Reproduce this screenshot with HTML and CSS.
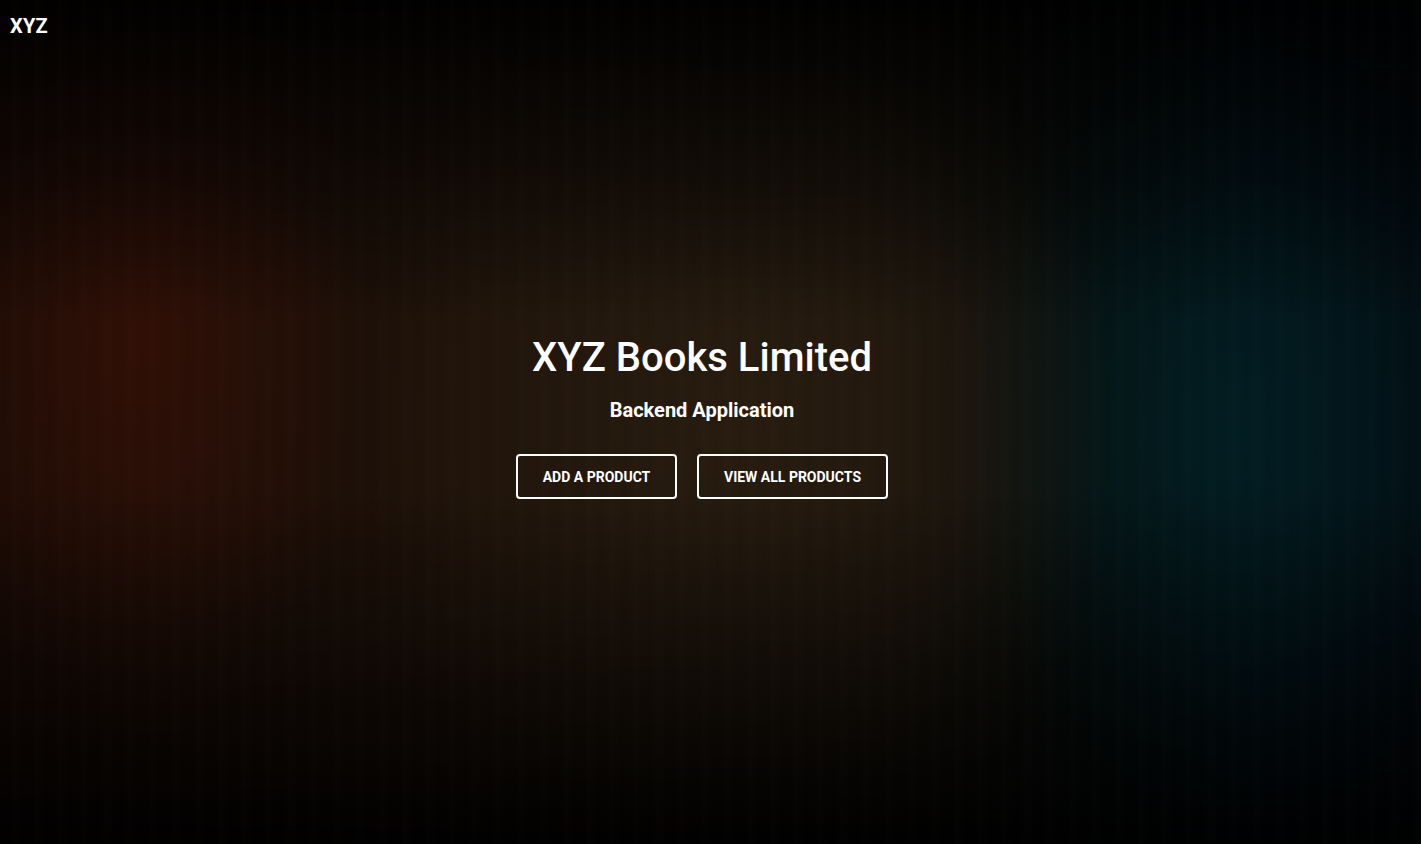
FILE: index.html
```html
<!DOCTYPE html>
<html lang="en">
<head>
<meta charset="utf-8">
<title>XYZ Books Limited</title>
<link rel="stylesheet" href="styles.css">
</head>
<body>
<div class="page">
  <header class="topbar">
    <a class="brand" href="#">XYZ</a>
  </header>
  <main class="hero">
    <h1 class="hero-title">XYZ Books Limited</h1>
    <h2 class="hero-sub">Backend Application</h2>
    <div class="actions">
      <a class="btn btn-add" href="#">Add a product</a>
      <a class="btn btn-view" href="#">View all products</a>
    </div>
  </main>
</div>
</body>
</html>
```
FILE: styles.css
```css
html, body {
  margin: 0;
  padding: 0;
  height: 100%;
}
body {
  font-family: Roboto, "Liberation Sans", Arial, sans-serif;
  color: #fff;
  background-color: #000;
}
.page {
  min-height: 844px;
  height: 100%;
  display: flex;
  flex-direction: column;
  background:
    repeating-linear-gradient(to right, rgba(0,0,0,0) 0px, rgba(0,0,0,0.03) 4px, rgba(0,0,0,0) 9px, rgba(255,255,255,0.008) 14px, rgba(0,0,0,0) 23px),
    linear-gradient(to bottom, rgba(0,0,0,0.95) 0%, rgba(0,0,0,0.45) 22%, rgba(0,0,0,0) 38%, rgba(0,0,0,0) 58%, rgba(0,0,0,0.4) 76%, rgba(0,0,0,0.96) 100%),
    radial-gradient(ellipse 230px 400px at 140px 340px, rgba(52,16,6,0.85), rgba(52,16,6,0) 100%),
    radial-gradient(ellipse 380px 460px at 740px 420px, rgba(40,28,16,1), rgba(40,28,16,0) 100%),
    radial-gradient(ellipse 280px 400px at 1230px 430px, rgba(2,30,34,0.95), rgba(2,30,34,0) 100%),
    linear-gradient(to right, #1a0b05 0%, #1e1209 35%, #1a130b 62%, #080e0c 76%, #02121a 88%, #020a10 100%);
}
.topbar {
  height: 52px;
  display: flex;
  align-items: center;
  padding: 0 10px;
}
.brand {
  color: #fff;
  text-decoration: none;
  font-weight: 700;
  font-size: 20px;
  letter-spacing: 0.2px;
  margin-top: -1px;
}
.hero {
  flex: 1;
  display: flex;
  flex-direction: column;
  align-items: center;
  padding-top: 282px;
  padding-right: 17px;
}
.hero-title {
  margin: 0;
  font-size: 40px;
  font-weight: 500;
  line-height: 48px;
}
.hero-sub {
  margin: 16px 0 0;
  font-size: 20px;
  font-weight: 700;
  line-height: 24px;
}
.actions {
  display: flex;
  gap: 20px;
  margin-top: 32px;
}
.btn {
  display: flex;
  align-items: center;
  justify-content: center;
  height: 45px;
  padding-top: 1px;
  box-sizing: border-box;
  border: 2px solid #fff;
  border-radius: 4px;
  color: #fff;
  text-decoration: none;
  text-transform: uppercase;
  font-weight: 700;
  font-size: 14px;
}
.btn-add { width: 161px; }
.btn-view { width: 191px; }
```
